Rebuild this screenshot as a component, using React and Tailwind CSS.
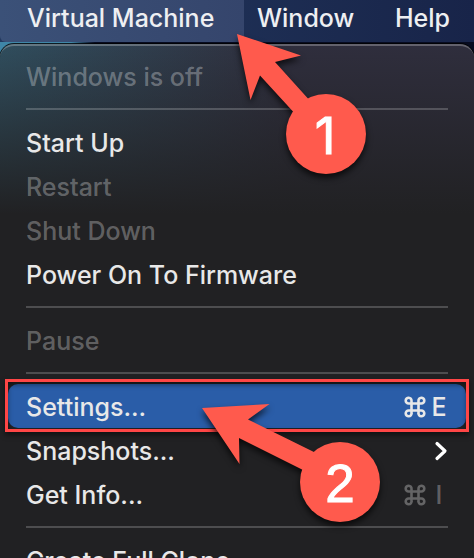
import React from "react";

function Item({ label, disabled, active, children }) {
  const tone = disabled ? "text-white/30" : "text-[#e8e8e8]";
  return (
    <li role="none">
      <button
        type="button"
        role="menuitem"
        disabled={disabled}
        className={`flex h-11 w-full items-center justify-between rounded-[10px] pt-0.5 pr-[18px] pl-[18px] text-left whitespace-nowrap ${tone} ${active ? "bg-[#2a5da8]" : ""}`}
      >
        <span>{label}</span>
        {children}
      </button>
    </li>
  );
}

function Divider() {
  return <li role="separator" className="mx-[18px] my-2.5 h-0.5 bg-white/20" />;
}

function Command() {
  return (
    <svg viewBox="0 0 22 22" className="size-[22px]" fill="none" stroke="currentColor" strokeWidth="2.6" aria-label="Command">
      <path d="M7.5 7.5h7v7h-7zM7.5 7.5V4.8A2.9 2.9 0 1 0 4.6 7.5zM14.5 7.5V4.8A2.9 2.9 0 1 1 17.4 7.5zM14.5 14.5V17.2A2.9 2.9 0 1 0 17.4 14.5zM7.5 14.5V17.2A2.9 2.9 0 1 1 4.6 14.5z" />
    </svg>
  );
}

function Shortcut({ letter, muted }) {
  return (
    <span className={`flex items-center gap-1 ${muted ? "text-white/30" : ""}`}>
      <Command />
      <kbd className="w-[18px] text-center font-[Inter,sans-serif]">{letter}</kbd>
    </span>
  );
}

function Callouts() {
  return (
    <svg className="pointer-events-none absolute top-0 left-0 h-[558px] w-[474px] drop-shadow-[0_4px_3px_rgba(0,0,0,0.7)]" viewBox="0 0 474 558">
      <g fill="#ff5a4d">
        <path d="M237 34 301 55.5 275 62 312 103 298 117 260 75.5 250.5 100z" />
        <circle cx="326" cy="134" r="40" />
        <path d="M202 408 269.5 404 248 419.5 318 454 307 472 239 438 239.5 464z" />
        <circle cx="340" cy="482" r="40" />
      </g>
      <g fill="#fff" stroke="#fff" textAnchor="middle" className="font-normal">
        <text x="325" y="154" className="font-[Inter,sans-serif] text-[51px]">1</text>
        <text x="340" y="502" className="font-['Liberation_Sans',sans-serif] text-[53px]">2</text>
      </g>
    </svg>
  );
}

export default function App() {
  return (
    <div className="relative h-screen overflow-hidden bg-[#1b2951] font-[Inter,sans-serif] text-[25px] leading-9 font-medium text-[#eeeff2]">
      <nav className="flex h-[42px] bg-linear-to-r from-[#23395f] to-[#182449] whitespace-nowrap">
        <button type="button" className="h-[42px] w-[244px] rounded-bl-md bg-linear-to-r from-[#3b5178] to-[#35456c] pb-1.5 pl-[27px] text-left">
          Virtual Machine
        </button>
        <button type="button" className="pb-1.5 pl-[13px]">Window</button>
        <button type="button" className="ml-auto pr-6 pb-1.5">Help</button>
      </nav>
      <div className="bg-linear-to-r from-[#3f86a8] from-15% to-[#070b20] to-20% pt-0.5">
        <ul
          role="menu"
          className="h-screen rounded-t-[14px] border-t-2 border-white/25 bg-[#212123] bg-[linear-gradient(to_bottom,transparent,#212123_170px),linear-gradient(to_right,#304e5e,#2f2e3d_60%)] bg-origin-border px-2 py-2 ring-1 ring-black/80"
        >
          <Item label="Windows is off" disabled />
          <Divider />
          <Item label="Start Up" />
          <Item label="Restart" disabled />
          <Item label="Shut Down" disabled />
          <Item label="Power On To Firmware" />
          <Divider />
          <Item label="Pause" disabled />
          <Divider />
          <Item label="Settings..." active>
            <Shortcut letter="E" />
          </Item>
          <Item label="Snapshots...">
            <svg viewBox="0 0 14 20" className="h-5 w-3.5" fill="none" stroke="#fff" strokeWidth="3.2" strokeLinecap="round" strokeLinejoin="round" aria-hidden="true">
              <path d="M3 2.5 11 10 3 17.5" />
            </svg>
          </Item>
          <Item label="Get Info...">
            <Shortcut letter="I" muted />
          </Item>
          <Divider />
          <Item label="Create Full Clone..." />
        </ul>
      </div>
      <div className="pointer-events-none absolute inset-x-[5px] top-[379px] h-[53px] border-3 border-[#ff4646] shadow-[0_3px_5px_rgba(0,0,0,0.5),inset_0_3px_5px_rgba(0,0,0,0.4)]" />
      <Callouts />
    </div>
  );
}
